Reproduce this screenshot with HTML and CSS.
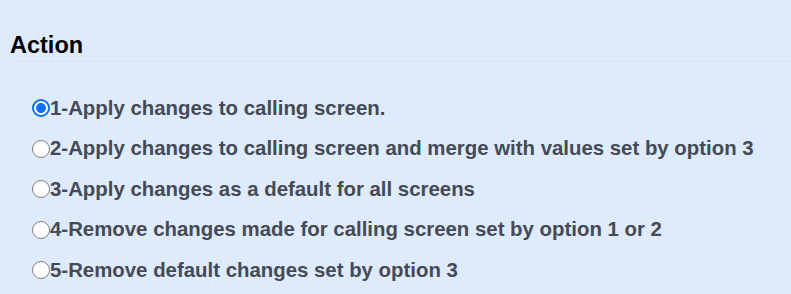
FILE: index.html
```html
<!DOCTYPE html>
<html lang="en">
<head>
  <meta charset="UTF-8">
  <title>Action</title>
  <link rel="stylesheet" href="styles.css">
</head>
<body>
<div class="action_part">
  <h4 class="action_title">Action</h4>
  <ul class="optlist">
    <li><input type="radio" name="act" id="act1" checked><label for="act1">1-Apply changes to calling screen.</label></li>
    <li><input type="radio" name="act" id="act2"><label for="act2">2-Apply changes to calling screen and merge with values set by option 3</label></li>
    <li><input type="radio" name="act" id="act3"><label for="act3">3-Apply changes as a default for all screens</label></li>
    <li><input type="radio" name="act" id="act4"><label for="act4">4-Remove changes made for calling screen set by option 1 or 2</label></li>
    <li><input type="radio" name="act" id="act5"><label for="act5">5-Remove default changes set by option 3</label></li>
  </ul>
</div>
</body>
</html>
```

FILE: styles.css
```css
html, body { margin: 0; padding: 0; background: #deebfd; }
body { font-family: "Liberation Sans", Arial, sans-serif; }
.action_part { padding: 32px 0 0 10px; }
.action_title { margin: 0; font-size: 23.5px; line-height: 27px; font-weight: bold; color: #000; padding-bottom: 2px; border-bottom: 1px solid #e6e2e4; }
.optlist { list-style: none; margin: 0; padding: 26px 0 0 22px; }
.optlist li { display: flex; align-items: center; height: 40.5px; }
.optlist input { -webkit-appearance: none; appearance: none; box-sizing: border-box; margin: 0; width: 18px; height: 18px; border: 1.5px solid #7f7f7f; border-radius: 50%; background: #fff; flex: none; }
.optlist input:checked { border: 2px solid #0a6ff2; background: radial-gradient(circle, #0a6ff2 0 4.6px, #fff 5.2px); }
.optlist label { font-size: 20.4px; font-weight: bold; color: #454a55; }
```
